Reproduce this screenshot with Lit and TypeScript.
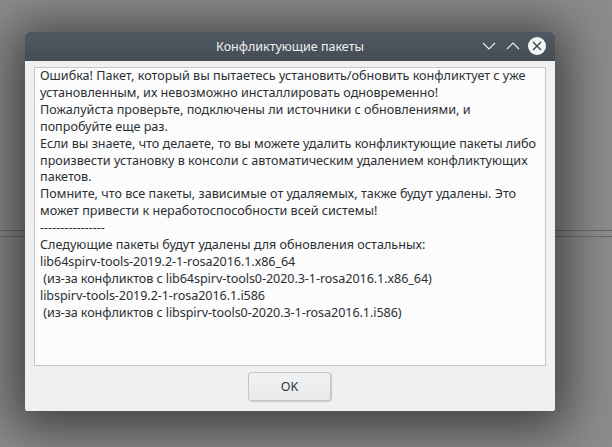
import { LitElement, html, css } from "lit";
import { customElement } from "lit/decorators.js";

const PROSE = [
  "Ошибка! Пакет, который вы пытаетесь установить/обновить конфликтует с уже",
  "установленным, их невозможно инсталлировать одновременно!",
  "Пожалуйста проверьте, подключены ли источники с обновлениями, и",
  "попробуйте еще раз.",
  "Если вы знаете, что делаете, то вы можете удалить конфликтующие пакеты либо",
  "произвести установку в консоли с автоматическим удалением конфликтующих",
  "пакетов.",
  "Помните, что все пакеты, зависимые от удаляемых, также будут удалены. Это",
  "может привести к неработоспособности всей системы!",
  "----------------",
  "Следующие пакеты будут удалены для обновления остальных:",
];
const PACKAGES = [
  "lib64spirv-tools-2019.2-1-rosa2016.1.x86_64",
  " (из-за конфликтов с lib64spirv-tools0-2020.3-1-rosa2016.1.x86_64)",
  "libspirv-tools-2019.2-1-rosa2016.1.i586",
  " (из-за конфликтов с libspirv-tools0-2020.3-1-rosa2016.1.i586)",
];

@customElement("app-root")
export class AppRoot extends LitElement {
  static styles = css`
    :host {
      display: block;
      position: relative;
      width: 612px;
      height: 447px;
      overflow: hidden;
      background: #8c8c8c;
      font-family: "Noto Sans", sans-serif;
      box-sizing: border-box;
      padding: 32px 57px 36px 25px;
    }
    .rule {
      position: absolute;
      left: 0;
      right: 0;
      top: 230px;
      height: 7px;
      border-top: 1px solid rgba(0, 0, 0, 0.24);
      border-bottom: 1px solid rgba(0, 0, 0, 0.24);
      box-sizing: border-box;
    }
    .window {
      position: relative;
      height: 379px;
      display: flex;
      flex-direction: column;
      border-radius: 4px 4px 2px 2px;
      background: #eff0f1;
      box-shadow: 0 6px 50px 12px rgba(0, 0, 0, 0.55);
    }
    .titlebar {
      height: 29px;
      flex: none;
      display: grid;
      grid-template-columns: 1fr;
      align-items: center;
      position: relative;
      border-radius: 4px 4px 0 0;
      background: linear-gradient(#4f5961, #454d54);
      color: #eff0f1;
      font-size: 12.5px;
      text-align: center;
    }
    .controls {
      position: absolute;
      right: 9px;
      top: 5px;
      display: flex;
      align-items: center;
      gap: 6px;
    }
    .controls svg { display: block; }
    .body {
      flex: 1;
      min-height: 0;
      display: flex;
      flex-direction: column;
      padding: 6px 9px 10px 9px;
      gap: 6px;
    }
    .text {
      flex: 1;
      min-height: 0;
      box-sizing: border-box;
      background: #fcfcfc;
      border: 1px solid #c4c6c8;
      padding: 0 5px;
      font-size: 12.6px;
      line-height: 16.9px;
      white-space: pre;
      color: #2b2f33;
    }
    .packages {
      display: block;
      letter-spacing: -0.08px;
    }
    .actions {
      display: flex;
      justify-content: center;
      padding-right: 1px;
    }
    button {
      width: 83px;
      height: 29px;
      box-sizing: border-box;
      border: 1px solid #c2c4c6;
      border-radius: 3px;
      background: linear-gradient(#f0f1f2, #e9eaeb);
      box-shadow: 1px 1px 1px #c8c9ca;
      color: #31363b;
      font-family: inherit;
      font-size: 12.5px;
      padding: 0;
    }
  `;

  render() {
    return html`
      <div class="rule"></div>
      <div class="window">
        <div class="titlebar">
          <span>Конфликтующие пакеты</span>
          <div class="controls">
            <svg width="18" height="18" viewBox="0 0 18 18" fill="none" stroke="#eff0f1" stroke-width="1.1"><path d="M3 6l6 6 6-6"/></svg>
            <svg width="18" height="18" viewBox="0 0 18 18" fill="none" stroke="#eff0f1" stroke-width="1.1"><path d="M3 12l6-6 6 6"/></svg>
            <svg width="18" height="18" viewBox="0 0 18 18"><circle cx="9" cy="9" r="9" fill="#f4f5f5"/><path d="M5 5l8 8M13 5l-8 8" stroke="#434a50" stroke-width="1.5"/></svg>
          </div>
        </div>
        <div class="body">
          <div class="text">${PROSE.join("\n")}<span class="packages">${PACKAGES.join("\n")}</span></div>
          <div class="actions"><button>OK</button></div>
        </div>
      </div>
    `;
  }
}
